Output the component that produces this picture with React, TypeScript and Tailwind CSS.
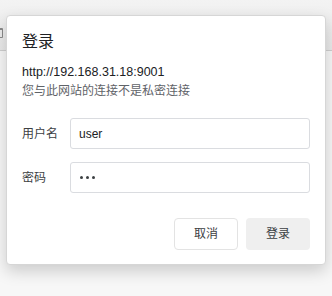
import React from "react";

const cjk = { fontFamily: '"Liberation Sans", "Noto Sans CJK SC", sans-serif' };

export default function App() {
  return (
    <div className="relative w-[332px] h-[296px] overflow-hidden bg-[#f7f7f7]" style={cjk}>
      <div className="h-[51px] bg-gradient-to-b from-[#f3f3f3] to-[#e9e9e9] border-b border-[#cfcfcf]" />
      <div className="absolute left-[-2px] top-[28px] w-[5px] h-[10px] border border-[#8a8a8a] border-t-2 rounded-[1px]" />
      <div className="absolute left-[6px] top-[15px] w-[320px] h-[250px] bg-white rounded-[4px] border border-[#d6d6d6] shadow-[0_6px_16px_rgba(0,0,0,0.18)] px-[15px] pt-[14px] flex flex-col">
        <div className="text-[16px] leading-[24px] text-[#202124]">登录</div>
        <div className="mt-[9px] text-[12.5px] leading-[18px] text-[#202124]">http://192.168.31.18:9001</div>
        <div className="mt-[1px] text-[12px] leading-[19px] text-[#5f6368]">您与此网站的连接不是私密连接</div>
        <div className="mt-[17px] flex items-center">
          <div className="w-[48px] text-[12px] text-[#3c4043]">用户名</div>
          <div className="w-[240px] h-[31px] border border-[#dadce0] rounded-[3px] flex items-center px-[8px] text-[12px] text-[#202124]">user</div>
        </div>
        <div className="mt-[13px] flex items-center">
          <div className="w-[48px] text-[12px] text-[#3c4043]">密码</div>
          <div className="w-[240px] h-[31px] border border-[#dadce0] rounded-[3px] flex items-center px-[9px] gap-[3px]">
            <span className="w-[3px] h-[3px] rounded-full bg-[#3c4043]" />
            <span className="w-[3px] h-[3px] rounded-full bg-[#3c4043]" />
            <span className="w-[3px] h-[3px] rounded-full bg-[#3c4043]" />
          </div>
        </div>
        <div className="mt-[25px] flex justify-end gap-[8px]">
          <div className="w-[64px] h-[32px] border border-[#e3e3e3] rounded-[4px] bg-white flex items-center justify-center text-[12px] text-[#3c4043]">取消</div>
          <div className="w-[64px] h-[32px] rounded-[4px] bg-[#efefef] flex items-center justify-center text-[12px] text-[#3c4043]">登录</div>
        </div>
      </div>
    </div>
  );
}
